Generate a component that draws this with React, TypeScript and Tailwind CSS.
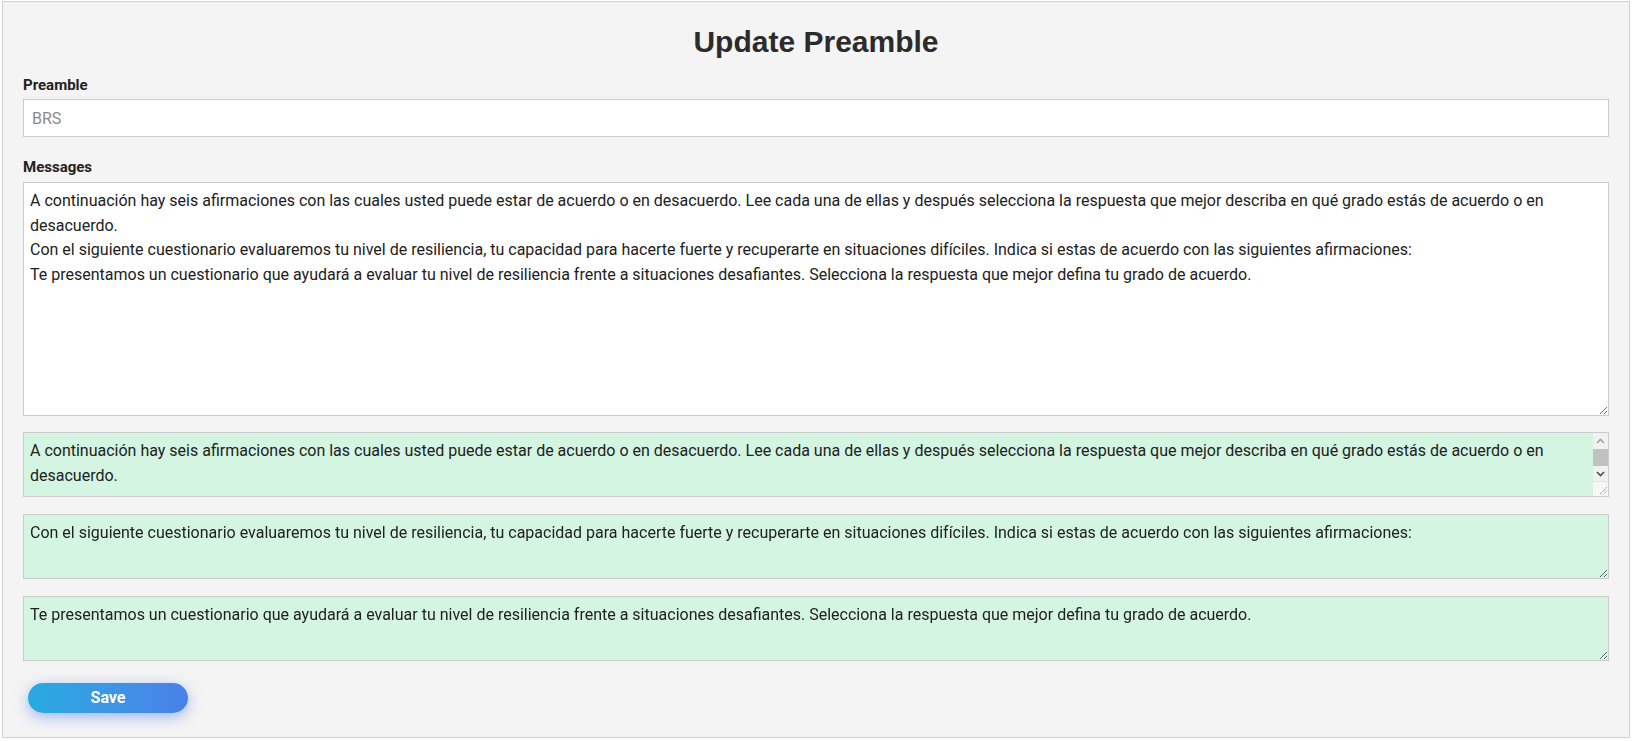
import { useState } from "react";

const MESSAGES = [
  "A continuación hay seis afirmaciones con las cuales usted puede estar de acuerdo o en desacuerdo. Lee cada una de ellas y después selecciona la respuesta que mejor describa en qué grado estás de acuerdo o en desacuerdo.",
  "Con el siguiente cuestionario evaluaremos tu nivel de resiliencia, tu capacidad para hacerte fuerte y recuperarte en situaciones difíciles. Indica si estas de acuerdo con las siguientes afirmaciones:",
  "Te presentamos un cuestionario que ayudará a evaluar tu nivel de resiliencia frente a situaciones desafiantes. Selecciona la respuesta que mejor defina tu grado de acuerdo.",
];

function FakeScrollbar() {
  return (
    <div className="pointer-events-none absolute top-px right-px bottom-px flex w-[15px] flex-col bg-[#f1f1f1]">
      <div className="flex h-[15px] items-center justify-center">
        <svg width="9" height="6" viewBox="0 0 9 6">
          <path d="M1 5 L4.5 1.5 L8 5" fill="none" stroke="#a3a3a3" strokeWidth="1.6" />
        </svg>
      </div>
      <div className="flex flex-1 flex-col px-0 py-px">
        <div className="flex-1 bg-[#c1c1c1]" />
      </div>
      <div className="flex h-[14px] items-center justify-center">
        <svg width="9" height="6" viewBox="0 0 9 6">
          <path d="M1 1 L4.5 4.5 L8 1" fill="none" stroke="#505050" strokeWidth="1.6" />
        </svg>
      </div>
      <div className="relative h-[15px] border-t border-[#e2e2e2] bg-[#f7f7f7]">
        <svg className="absolute right-[1px] bottom-[1px]" width="9" height="9" viewBox="0 0 9 9">
          <path d="M8.5 1.5 L1.5 8.5 M8.5 5 L5 8.5" stroke="#6b6b6b" strokeWidth="1" strokeDasharray="1 1" />
        </svg>
      </div>
    </div>
  );
}

export default function App() {
  const [preamble, setPreamble] = useState("");
  const [messages, setMessages] = useState<string[]>(MESSAGES);
  const [all, setAll] = useState(MESSAGES.join("\n"));

  function updateMessage(idx: number, value: string) {
    setMessages(prev => prev.map((m, i) => (i === idx ? value : m)));
  }

  return (
    <div className="min-h-screen bg-white font-['Roboto',sans-serif]">
      <div className="mx-[2px] mt-px border border-[#d0d0d0] bg-[#f4f4f4] px-5 pt-[21px] pb-[24px]">
        <h1 className="text-center font-['Liberation_Sans',Arial,sans-serif] text-[30px] font-bold leading-[38px] text-[#2b2b2b]">
          Update Preamble
        </h1>

        <label className="mt-[14px] mb-[4px] block text-[15px] font-bold leading-[20px] text-[#222]">Preamble</label>
        <input
          value={preamble}
          onChange={e => setPreamble(e.target.value)}
          placeholder="BRS"
          className="block h-[38px] w-full border border-[#cccccc] bg-white px-[8px] text-[16px] text-[#222] outline-none placeholder:text-[#8a8a8a]"
        />

        <label className="mt-[20px] mb-[5px] block text-[15px] font-bold leading-[20px] text-[#222]">Messages</label>
        <textarea
          value={all}
          onChange={e => setAll(e.target.value)}
          className="block h-[234px] w-full border border-[#cccccc] bg-white px-[6px] pt-[6px] pb-[6px] text-[16px] leading-[24.6px] text-[#212121] outline-none"
        />

        <div className="mt-[16px] flex flex-col gap-[17px]">
          {messages.map((m, i) => (
            <div key={i} className="relative">
              <textarea
                value={m}
                onChange={e => updateMessage(i, e.target.value)}
                className={`block h-[65px] w-full border border-[#cccccc] bg-[#d4f5e2] pl-[6px] pt-[6px] pb-[10px] text-[16px] leading-[24.6px] text-[#212121] outline-none ${
                  i === 0 ? "pr-[21px]" : "pr-[6px]"
                }`}
              />
              {i === 0 && <FakeScrollbar />}
            </div>
          ))}
        </div>

        <button className="mt-[22px] ml-[5px] h-[30px] w-[160px] rounded-full bg-gradient-to-r from-[#25abe0] to-[#4a80e9] text-[16px] font-bold text-white shadow-[0_4px_14px_rgba(70,120,240,0.5)]">
          Save
        </button>
      </div>
    </div>
  );
}
